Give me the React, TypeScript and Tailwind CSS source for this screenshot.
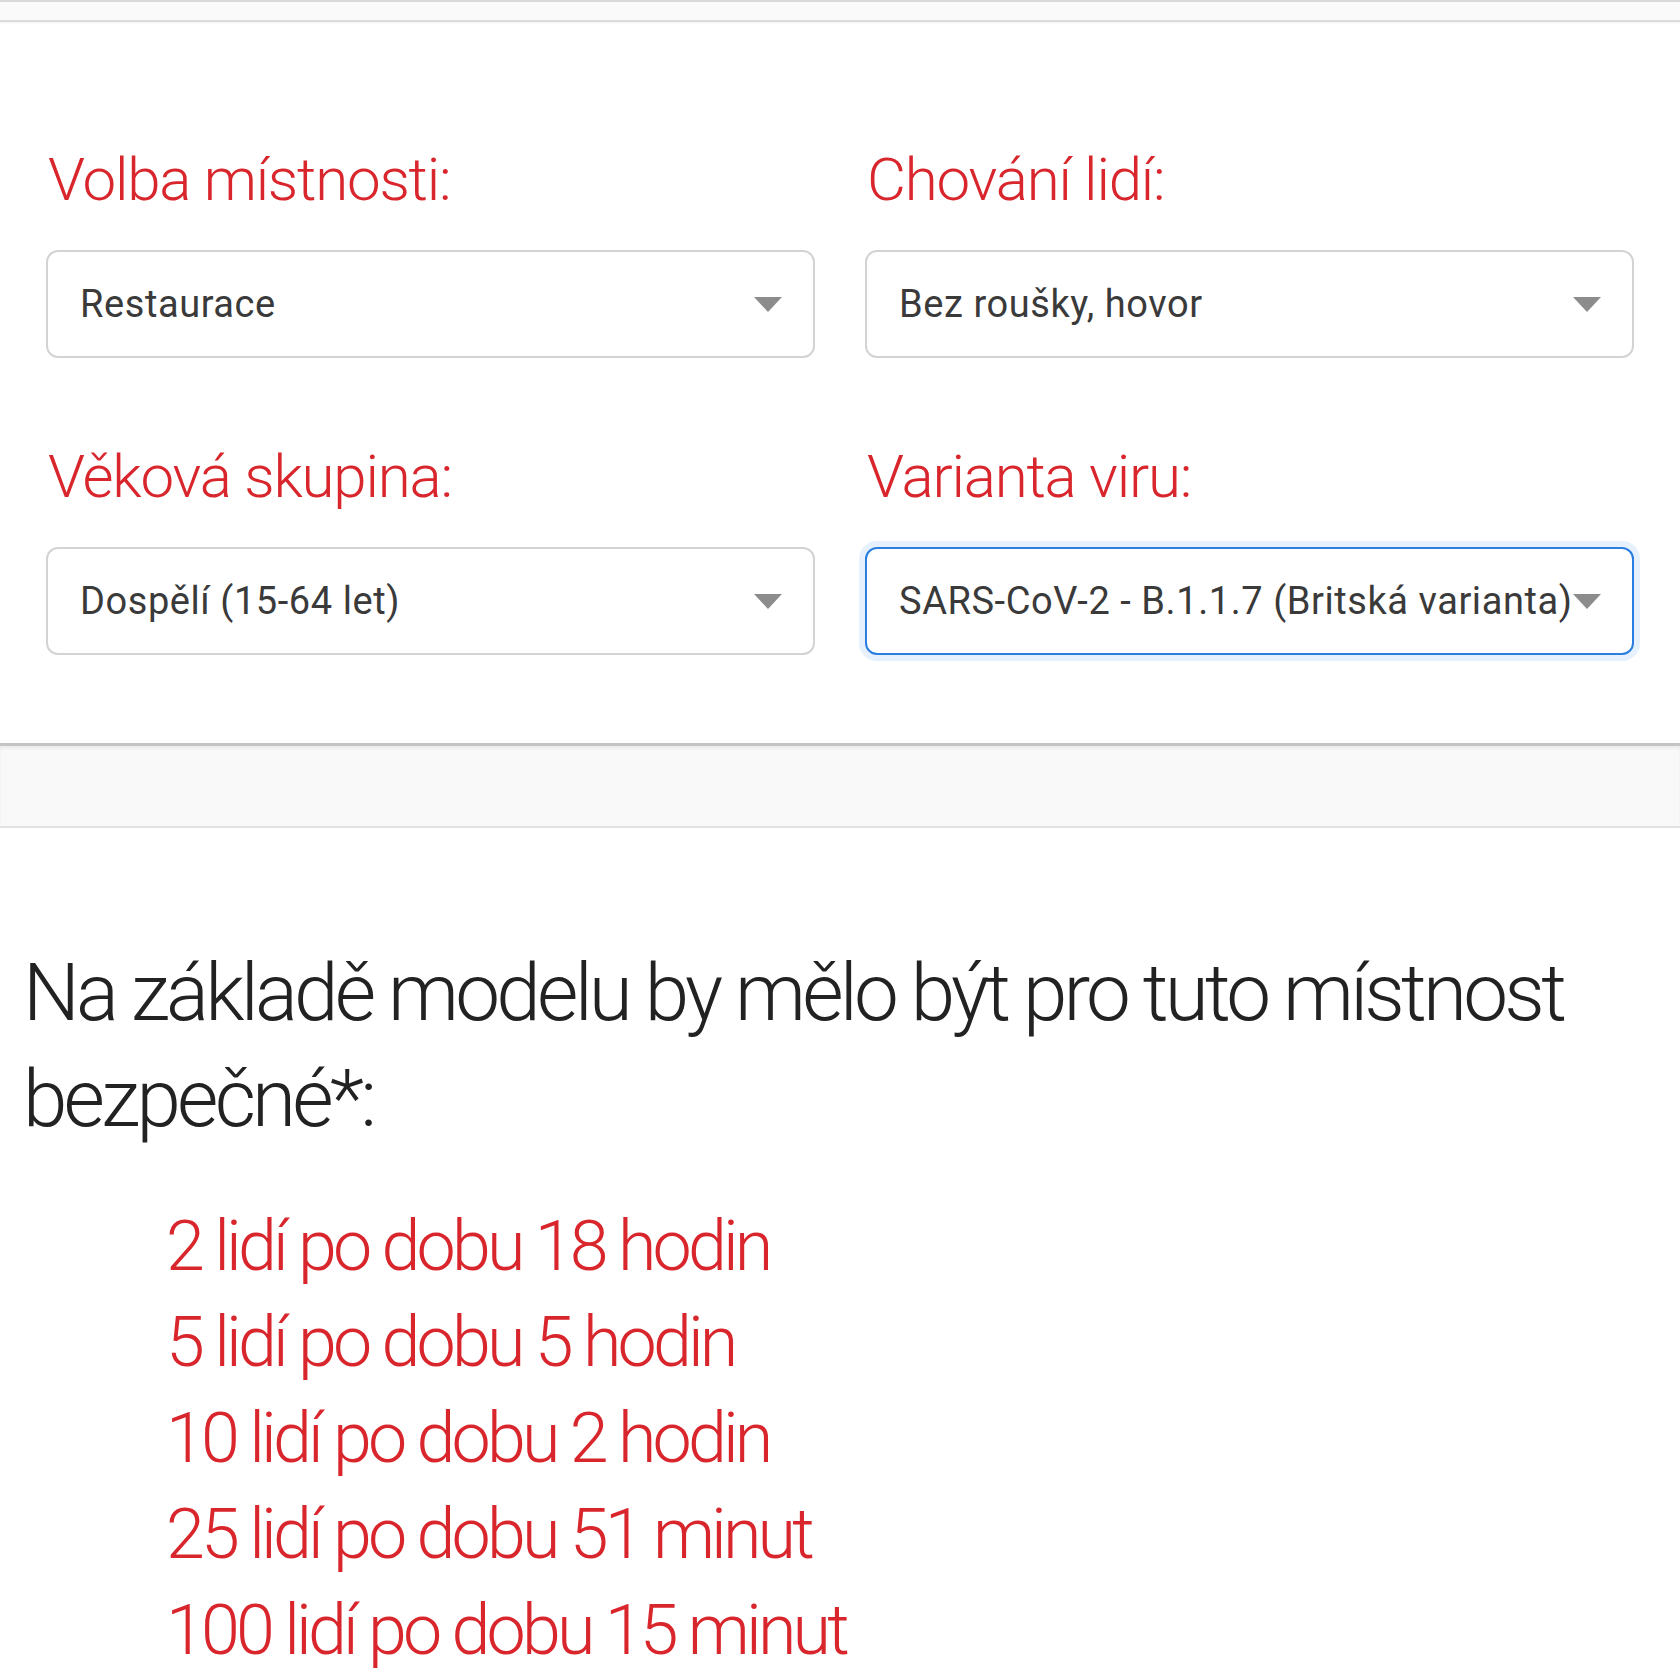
import React from 'react';

const labelCls =
  "block text-[60px] leading-[72px] font-light tracking-[-0.02em] text-[#d8262c] pl-[2px]";

type SelectProps = {
  value: string;
  focused?: boolean;
};

const Arrow = () => (
  <svg width="28" height="15" viewBox="0 0 28 15" className="shrink-0">
    <polygon points="0,0 28,0 14,15" fill="#8c8c8c" />
  </svg>
);

const FakeSelect: React.FC<SelectProps> = ({ value, focused }) => (
  <div
    className={
      focused
        ? "mt-[34px] h-[108px] flex items-center justify-between rounded-[12px] border-2 border-[#2a7de1] bg-white pl-[32px] pr-[31px] shadow-[0_0_0_6px_#e6f1fd]"
        : "mt-[34px] h-[108px] flex items-center justify-between rounded-[12px] border-2 border-[#d3d3d3] bg-white pl-[32px] pr-[31px]"
    }
  >
    <span className="text-[38px] leading-none tracking-[0.015em] text-[#3a3a3a] whitespace-nowrap">{value}</span>
    <Arrow />
  </div>
);

const results = [
  '2 lidí po dobu 18 hodin',
  '5 lidí po dobu 5 hodin',
  '10 lidí po dobu 2 hodin',
  '25 lidí po dobu 51 minut',
  '100 lidí po dobu 15 minut',
];

export default function App() {
  return (
    <div className="min-h-screen bg-white" style={{ fontFamily: 'Roboto, "Noto Sans", sans-serif' }}>
      {/* top strip */}
      <div className="h-[22px] bg-[#fafafa] border-t-2 border-[#d9d9d9] border-b-2 border-b-[#dcdcdc] shadow-[0_1px_2px_rgba(0,0,0,0.06)]" />

      {/* form */}
      <div className="px-[46px] pt-[122px] pb-[88px] grid grid-cols-2 gap-x-[50px] gap-y-[83px]">
        <div>
          <label className={labelCls}>Volba místnosti:</label>
          <FakeSelect value="Restaurace" />
        </div>
        <div>
          <label className={labelCls}>Chování lidí:</label>
          <FakeSelect value="Bez roušky, hovor" />
        </div>
        <div>
          <label className={labelCls}>Věková skupina:</label>
          <FakeSelect value="Dospělí (15-64 let)" />
        </div>
        <div>
          <label className={labelCls}>Varianta viru:</label>
          <FakeSelect value="SARS-CoV-2 - B.1.1.7 (Britská varianta)" focused />
        </div>
      </div>

      {/* divider band */}
      <div className="h-[85px] bg-[#f9f9f9] border-t-[3px] border-[#c4c4c4] border-b-2 border-b-[#e2e2e2] shadow-[inset_0_3px_3px_rgba(0,0,0,0.05)]" />

      {/* results */}
      <div className="pl-[23px] pr-[20px] pt-[112px]">
        <h2 className="text-[80px] leading-[106px] font-light tracking-[-0.047em] text-[#222222]">
          Na základě modelu by mělo být pro tuto místnost bezpečné*:
        </h2>
        <ul className="mt-[46px] ml-[143px]">
          {results.map((r) => (
            <li key={r} className="text-[70px] leading-[96px] font-light tracking-[-0.055em] text-[#d8262c]">
              {r}
            </li>
          ))}
        </ul>
      </div>
    </div>
  );
}
